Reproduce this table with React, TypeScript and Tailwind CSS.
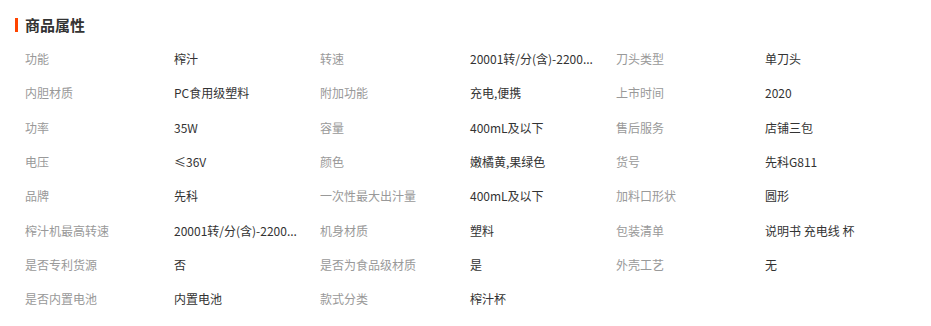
import React from "react";

const rows: [string, string][] = [
  ["功能", "榨汁"],
  ["转速", "20001转/分(含)-2200..."],
  ["刀头类型", "单刀头"],
  ["内胆材质", "PC食用级塑料"],
  ["附加功能", "充电,便携"],
  ["上市时间", "2020"],
  ["功率", "35W"],
  ["容量", "400mL及以下"],
  ["售后服务", "店铺三包"],
  ["电压", "≤36V"],
  ["颜色", "嫩橘黄,果绿色"],
  ["货号", "先科G811"],
  ["品牌", "先科"],
  ["一次性最大出汁量", "400mL及以下"],
  ["加料口形状", "圆形"],
  ["榨汁机最高转速", "20001转/分(含)-2200..."],
  ["机身材质", "塑料"],
  ["包装清单", "说明书 充电线 杯"],
  ["是否专利货源", "否"],
  ["是否为食品级材质", "是"],
  ["外壳工艺", "无"],
  ["是否内置电池", "内置电池"],
  ["款式分类", "榨汁杯"],
];

export default function App() {
  return (
    <div
      className="w-[931px] h-[326px] bg-white overflow-hidden"
      style={{ fontFamily: '"Microsoft YaHei", Tahoma, "Noto Sans CJK SC", sans-serif' }}
    >
      <div className="flex items-center pl-[15px] pt-[17px] h-[33px]">
        <div className="w-[3px] h-[14px] bg-[#ff4400]" />
        <div className="ml-[7px] text-[15px] font-bold text-[#333] leading-[16px]">商品属性</div>
      </div>
      <div className="pl-[25px] pt-[9px] grid grid-cols-[149px_146px_150px_146px_149px_1fr] auto-rows-[34.3px] text-[12px]">
        {rows.map(([k, v], i) => (
          <React.Fragment key={i}>
            <div className="flex items-center text-[#999] whitespace-nowrap">{k}</div>
            <div className="flex items-center text-[#333] whitespace-nowrap">{v}</div>
          </React.Fragment>
        ))}
      </div>
    </div>
  );
}
